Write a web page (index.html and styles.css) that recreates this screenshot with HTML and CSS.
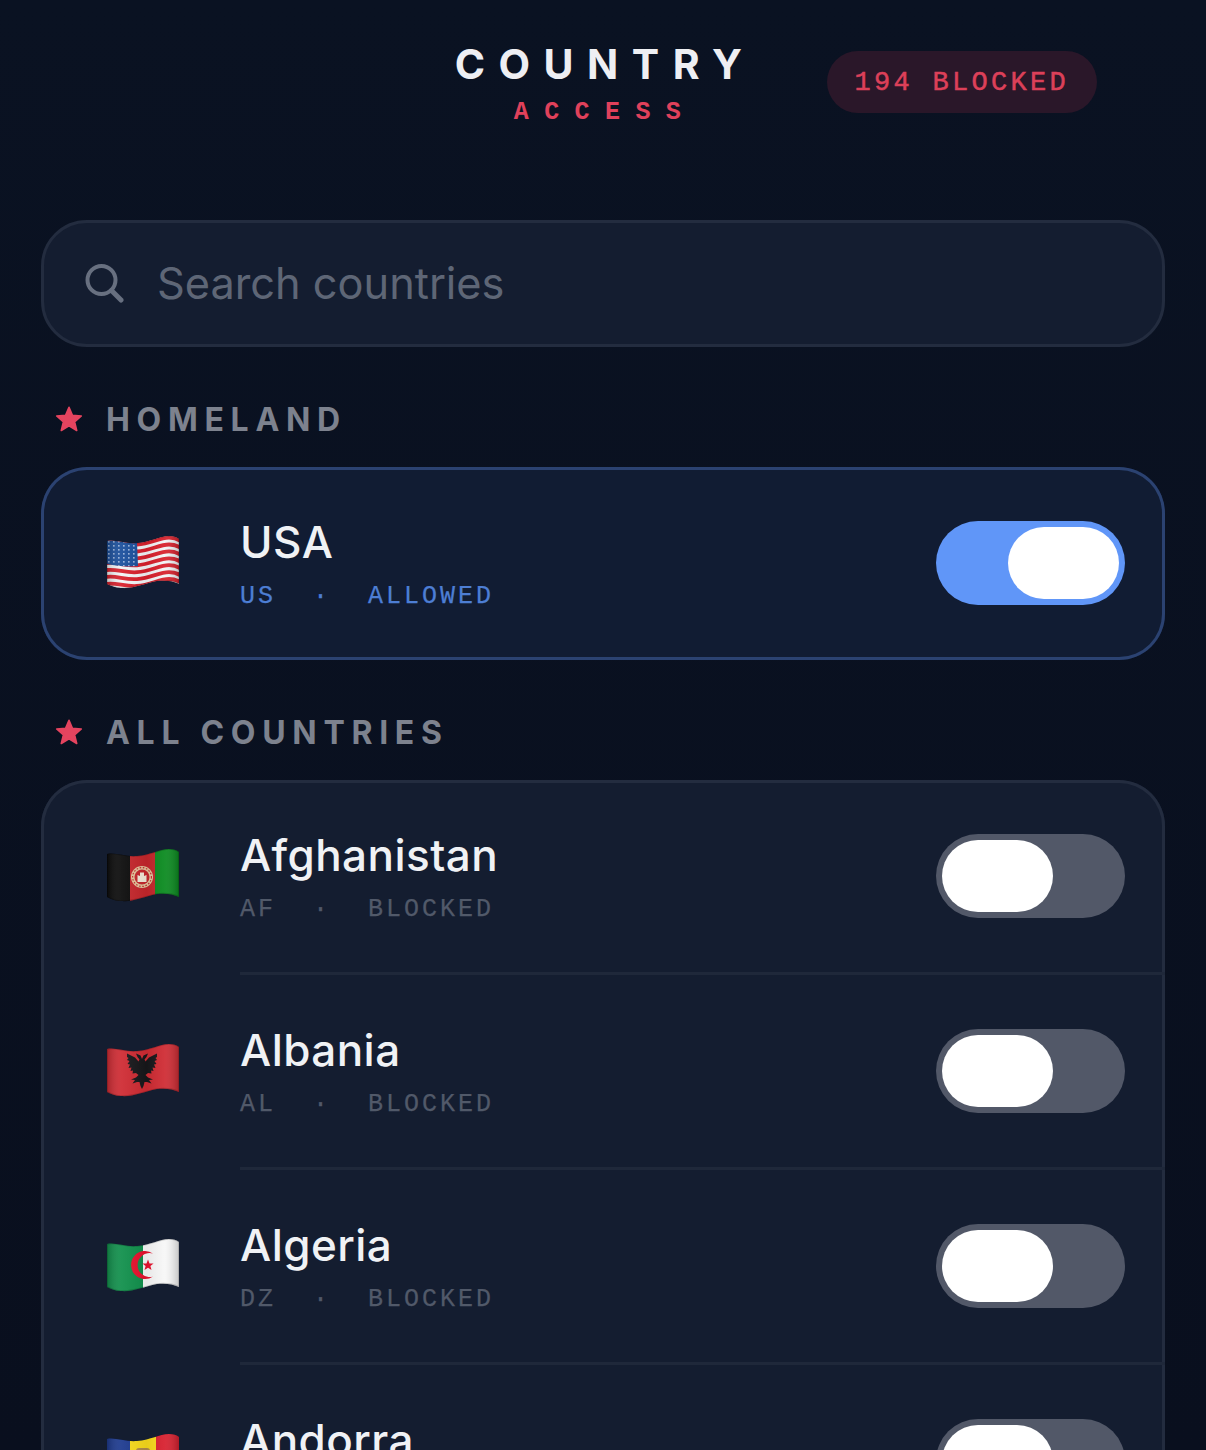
FILE: index.html
```html
<!DOCTYPE html>
<html lang="en">
<head>
  <meta charset="UTF-8">
  <title>Country Access</title>
  <link rel="stylesheet" href="styles.css">
</head>
<body>

<svg class="flag-defs" aria-hidden="true">
  <defs>
    <clipPath id="wave">
      <path d="M0 5C8 3 18 8 30 7C44 6 52 0 62 0C66 0 70 1 72 3L72 48C66 45 58 44 50 45C36 48 26 53 14 52C8 52 4 50 0 48Z"/>
    </clipPath>
    <path id="outline" d="M0 5C8 3 18 8 30 7C44 6 52 0 62 0C66 0 70 1 72 3L72 48C66 45 58 44 50 45C36 48 26 53 14 52C8 52 4 50 0 48Z"/>
    <path id="stripe" d="M-1 5C8 3 18 8 30 7C44 6 52 0 62 0C66 0 70 1 73 3" fill="none" stroke="#d8202c" stroke-width="3.8"/>
    <linearGradient id="sheen" x1="0" x2="1" y1="0" y2="0">
      <stop offset="0" stop-color="#000" stop-opacity=".2"/>
      <stop offset=".2" stop-color="#fff" stop-opacity=".06"/>
      <stop offset=".55" stop-color="#000" stop-opacity=".06"/>
      <stop offset=".8" stop-color="#fff" stop-opacity=".06"/>
      <stop offset="1" stop-color="#000" stop-opacity=".2"/>
    </linearGradient>
    <pattern id="stars" width="5" height="4" patternUnits="userSpaceOnUse">
      <rect x="1.2" y="1.2" width="1.3" height="1.3" fill="#dfe9fb"/>
    </pattern>
    <path id="wing" d="M35 15L36.5 11.5L41 9.5L39.5 13L37.5 15.5L38.5 17.5L42 13.5L50 9.5L50 13L48.5 14L50 16L47.5 17L49.5 20L47 20.5L48.5 24L45.5 23.5L46.5 27L44 26.5L44.5 29.5L41 29L38.5 31L41 33.5L46 35.5L42 36L44.5 39.5L40 38L37.5 38L36.5 42L35 45Z"/>
  </defs>
</svg>

<header class="top-bar">
  <div></div>
  <div class="brand">
    <div class="brand-title">COUNTRY</div>
    <div class="brand-sub">ACCESS</div>
  </div>
  <div class="blocked-pill">194 BLOCKED</div>
</header>

<div class="search-box">
  <svg class="search-icon" viewBox="0 0 40 40">
    <circle cx="17.5" cy="17" r="14" fill="none" stroke="#687080" stroke-width="4"/>
    <path d="M27.5 27.5L37 37" fill="none" stroke="#687080" stroke-width="5" stroke-linecap="round"/>
  </svg>
  <span class="search-text">Search countries</span>
</div>

<div class="section-label">
  <svg class="star" viewBox="0 0 28 28"><path d="M14 3L17.2 10.6L25.5 11.2L19.2 16.6L21.2 24.7L14 20.3L6.8 24.7L8.8 16.6L2.5 11.2L10.8 10.6Z" fill="#e5445f" stroke="#e5445f" stroke-width="1.5" stroke-linejoin="round"/></svg>
  <span>HOMELAND</span>
</div>

<div class="card card-home">
  <div class="row">
    <svg class="flag" viewBox="0 0 72 54">
      <g clip-path="url(#wave)">
        <use href="#outline" fill="#f2f4f6"/>
        <use href="#stripe" y="1.6"/>
        <use href="#stripe" y="8.5"/>
        <use href="#stripe" y="15.4"/>
        <use href="#stripe" y="22.3"/>
        <use href="#stripe" y="29.2"/>
        <use href="#stripe" y="36.1"/>
        <use href="#stripe" y="43"/>
        <path d="M0 5C8 3 18 8 30 7L31 30C20 31 10 30 0 28Z" fill="#1b4f9c"/>
        <path d="M0 5C8 3 18 8 30 7L31 30C20 31 10 30 0 28Z" fill="url(#stars)"/>
        <use href="#outline" fill="url(#sheen)"/>
        <use href="#outline" fill="none" stroke="#000" stroke-opacity=".18" stroke-width="1.5"/>
      </g>
    </svg>
    <div class="row-body">
      <div class="row-text">
        <div class="row-name">USA</div>
        <div class="row-meta meta-allowed"><span>US</span><span>·</span><span>ALLOWED</span></div>
      </div>
      <div class="toggle toggle-on"><div class="thumb"></div></div>
    </div>
  </div>
</div>

<div class="section-label">
  <svg class="star" viewBox="0 0 28 28"><path d="M14 3L17.2 10.6L25.5 11.2L19.2 16.6L21.2 24.7L14 20.3L6.8 24.7L8.8 16.6L2.5 11.2L10.8 10.6Z" fill="#e5445f" stroke="#e5445f" stroke-width="1.5" stroke-linejoin="round"/></svg>
  <span>ALL COUNTRIES</span>
</div>

<div class="card">
  <div class="row">
    <svg class="flag" viewBox="0 0 72 54">
      <g clip-path="url(#wave)">
        <rect width="23" height="54" fill="#0b0b0b"/>
        <rect x="23" width="25" height="54" fill="#c4262b"/>
        <rect x="48" width="24" height="54" fill="#0a8a1f"/>
        <circle cx="35" cy="28" r="11" fill="#e2c49a"/>
        <circle cx="35" cy="28" r="7.5" fill="#c4262b"/>
        <path d="M30.5 33V26L33 27V23.5H37V27L39.5 26V33Z" fill="#f3e7d6"/>
        <circle cx="35" cy="28" r="9.4" fill="none" stroke="#c4262b" stroke-width="1.1" stroke-dasharray="1.6 1.6"/>
        <use href="#outline" fill="url(#sheen)"/>
        <use href="#outline" fill="none" stroke="#000" stroke-opacity=".18" stroke-width="1.5"/>
      </g>
    </svg>
    <div class="row-body">
      <div class="row-text">
        <div class="row-name">Afghanistan</div>
        <div class="row-meta"><span>AF</span><span>·</span><span>BLOCKED</span></div>
      </div>
      <div class="toggle"><div class="thumb"></div></div>
    </div>
  </div>

  <div class="row">
    <svg class="flag" viewBox="0 0 72 54">
      <g clip-path="url(#wave)">
        <rect width="72" height="54" fill="#cf2b33"/>
        <use href="#wing" fill="#17171a"/>
        <use href="#wing" fill="#17171a" transform="matrix(-1 0 0 1 70 0)"/>
        <use href="#outline" fill="url(#sheen)"/>
        <use href="#outline" fill="none" stroke="#000" stroke-opacity=".18" stroke-width="1.5"/>
      </g>
    </svg>
    <div class="row-body">
      <div class="row-text">
        <div class="row-name">Albania</div>
        <div class="row-meta"><span>AL</span><span>·</span><span>BLOCKED</span></div>
      </div>
      <div class="toggle"><div class="thumb"></div></div>
    </div>
  </div>

  <div class="row">
    <svg class="flag" viewBox="0 0 72 54">
      <g clip-path="url(#wave)">
        <rect width="36" height="54" fill="#11904c"/>
        <rect x="36" width="36" height="54" fill="#f7f7f7"/>
        <path d="M46 14.5A14 14 0 1 0 46 37.5A12 12 0 1 1 46 14.5Z" fill="#e8112d"/>
        <path d="M41 20.5L42.5 24.4H46.6L43.4 27L44.5 31L41 28.7L37.5 31L38.6 27L35.4 24.4H39.5Z" fill="#e8112d"/>
        <use href="#outline" fill="url(#sheen)"/>
        <use href="#outline" fill="none" stroke="#000" stroke-opacity=".18" stroke-width="1.5"/>
      </g>
    </svg>
    <div class="row-body">
      <div class="row-text">
        <div class="row-name">Algeria</div>
        <div class="row-meta"><span>DZ</span><span>·</span><span>BLOCKED</span></div>
      </div>
      <div class="toggle"><div class="thumb"></div></div>
    </div>
  </div>

  <div class="row">
    <svg class="flag" viewBox="0 0 72 54">
      <g clip-path="url(#wave)">
        <rect width="23" height="54" fill="#1d3a8f"/>
        <rect x="23" width="26" height="54" fill="#f7d91c"/>
        <rect x="49" width="23" height="54" fill="#d8202f"/>
        <rect x="29" y="14" width="14" height="18" rx="3" fill="#b08a4a"/>
        <use href="#outline" fill="url(#sheen)"/>
      </g>
    </svg>
    <div class="row-body">
      <div class="row-text">
        <div class="row-name">Andorra</div>
        <div class="row-meta"><span>AD</span><span>·</span><span>BLOCKED</span></div>
      </div>
      <div class="toggle"><div class="thumb"></div></div>
    </div>
  </div>
</div>

</body>
</html>
```

FILE: styles.css
```css
html, body {
  height: 1450px;
  overflow: hidden;
}

body {
  margin: 0;
  padding: 0 41px;
  box-sizing: border-box;
  background: linear-gradient(180deg, #0a1222, #090f1e);
  font-family: 'Inter', sans-serif;
  color: #f0f2f5;
}

.flag-defs {
  display: block;
  width: 0;
  height: 0;
}

.top-bar {
  display: grid;
  grid-template-columns: 1fr auto 1fr;
  column-gap: 72px;
  height: 178px;
  padding: 38px 0 0 4px;
  box-sizing: border-box;
  margin: 0 -41px;
}

.brand {
  text-align: center;
}

.brand-title {
  font-size: 41px;
  line-height: 52px;
  font-weight: 700;
  letter-spacing: 13.5px;
  color: #eeeff3;
}

.brand-sub {
  margin-top: 7px;
  font-family: 'Liberation Mono', monospace;
  font-size: 25px;
  line-height: 32px;
  font-weight: 700;
  letter-spacing: 15.4px;
  color: #e0415b;
}

.blocked-pill {
  justify-self: start;
  margin-top: 13px;
  height: 62px;
  padding: 0 28px 0 27px;
  border-radius: 31px;
  background: #2a1729;
  color: #dc4059;
  font-family: 'Liberation Mono', monospace;
  font-size: 27px;
  line-height: 65px;
  letter-spacing: 3.3px;
  -webkit-text-stroke: 0.5px #dc4059;
  white-space: pre;
}

.search-box {
  display: flex;
  align-items: center;
  gap: 33px;
  height: 127px;
  margin-top: 42px;
  padding: 0 0 2px 40px;
  box-sizing: border-box;
  background: #141d30;
  border: 3px solid #232c3f;
  border-radius: 46px;
}

.search-icon {
  width: 40px;
  height: 40px;
}

.search-text {
  font-size: 43.3px;
  color: #5e6676;
}

.section-label {
  display: flex;
  align-items: center;
  gap: 22px;
  height: 32px;
  margin: 56px 0 32px 13px;
  font-size: 32px;
  font-weight: 700;
  letter-spacing: 6.7px;
  color: #7d828e;
}

.star {
  width: 30px;
  height: 30px;
}

.card {
  background: #141d30;
  border-radius: 46px;
  box-shadow: inset 0 0 0 3px #232c3f;
}

.card-home {
  background: #111c33;
  box-shadow: inset 0 0 0 3px #2b4271;
}

.card-home .row-body {
  border-bottom: none;
  height: 193px;
}

.row {
  display: flex;
  align-items: flex-start;
  padding-left: 66px;
}

.flag {
  flex: none;
  width: 72px;
  height: 54px;
  margin-top: 69px;
  margin-right: 61px;
  filter: blur(0.3px);
}

.row-body {
  flex: 1;
  display: flex;
  align-items: center;
  justify-content: space-between;
  height: 195px;
  padding: 0 40px 3px 0;
  box-sizing: border-box;
  border-bottom: 3px solid #1f283a;
}

.row-text {
  padding-top: 3px;
}

.row-name {
  font-size: 44px;
  line-height: 54px;
  font-weight: 500;
  letter-spacing: 0.45px;
  color: #f0f2f5;
}

.row-meta {
  display: flex;
  gap: 37px;
  margin-top: 13px;
  font-family: 'Liberation Mono', monospace;
  font-size: 25px;
  line-height: 30px;
  letter-spacing: 3px;
  -webkit-text-stroke: 0.25px currentColor;
  color: #515969;
}

.meta-allowed {
  color: #4d7ed4;
}

.toggle {
  display: flex;
  width: 189px;
  height: 84px;
  margin-top: 2px;
  padding: 6px;
  box-sizing: border-box;
  border-radius: 42px;
  background: #525868;
}

.toggle-on {
  justify-content: flex-end;
  background: #6096f8;
}

.thumb {
  width: 111px;
  height: 72px;
  border-radius: 36px;
  background: #ffffff;
}
```
